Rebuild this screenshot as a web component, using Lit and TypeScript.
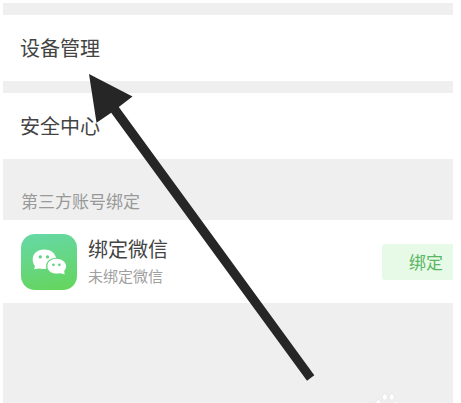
import { LitElement, html, css } from "lit";
import { customElement } from "lit/decorators.js";

@customElement("app-root")
export class AppRoot extends LitElement {
  static styles = css`
    :host {
      min-height: 100vh;
      box-sizing: border-box;
      padding: 3px 8px 0 3px;
      background: #fff;
      font-family: "Noto Sans CJK SC", sans-serif;
      position: relative;
      overflow: hidden;
      display: flex;
      flex-direction: column;
    }
    main {
      flex: 1;
      background: #efefef;
      padding-top: 12px;
    }
    .row {
      display: flex;
      align-items: center;
      height: 66px;
      padding: 0 17px;
      background: #fff;
      color: #444;
      font-size: 20px;
      line-height: 28px;
      text-decoration: none;
    }
    .row + .row {
      margin-top: 12px;
    }
    h2 {
      margin: 0;
      padding: 29px 18px 7px;
      font-size: 17px;
      line-height: 25px;
      font-weight: 400;
      color: #999;
    }
    .account {
      display: flex;
      align-items: center;
      height: 83px;
      padding-left: 18px;
      background: #fff;
    }
    .logo {
      flex: none;
      width: 56px;
      height: 56px;
    }
    .info {
      flex: 1;
      padding-left: 11px;
    }
    .name,
    .status {
      margin: 0;
    }
    .name {
      font-size: 20px;
      line-height: 28px;
      color: #444;
    }
    .status {
      font-size: 15px;
      line-height: 25px;
      color: #a0a0a0;
    }
    button {
      height: 36px;
      margin: 0;
      padding: 0 10px 0 27px;
      border: 0;
      border-radius: 3px 0 0 3px;
      background: #e6fae7;
      color: #5ab661;
      font: 17px/36px "Noto Sans CJK SC", sans-serif;
    }
    .arrow {
      position: absolute;
      left: 89px;
      top: 74px;
      width: 226px;
      height: 308px;
      pointer-events: none;
    }
    .paw {
      position: absolute;
      right: 62px;
      bottom: 0;
      width: 24px;
      height: 10px;
    }
  `;

  render() {
    return html`
      <main>
        <a class="row" href="#devices">设备管理</a>
        <a class="row" href="#security">安全中心</a>
        <h2>第三方账号绑定</h2>
        <section class="account">
          <svg class="logo" viewBox="0 0 56 56" aria-hidden="true">
            <defs>
              <linearGradient id="green" x1="0.4" y1="0" x2="0.6" y2="1">
                <stop offset="0" stop-color="#66d8a2" />
                <stop offset="1" stop-color="#65d560" />
              </linearGradient>
            </defs>
            <rect width="56" height="56" rx="14" fill="url(#green)" />
            <path
              fill="#fff"
              d="M23 15.500c-6.300 0-11.300 4.100-11.300 9.300 0 3 .6 5.400 2.200 7.100l-.6 3.400 4.800-.8c1.500.5 4.500.6 7.300.2-1.600-6.500 3.500-11 9.600-10.600C34.200 18.600 29.300 15.500 23 15.500z"
            />
            <path
              fill="#fff"
              d="M35.400 24.800c-5.200 0-9 3.300-9 7.400s3.900 7.400 9 7.400c1.500 0 2.900-.1 4.200-.4l4 1.200-.4-3.600c1.200-1.300 1.900-2.700 1.900-4.600 0-4.100-4.500-7.400-9.700-7.400z"
            />
            <g fill="#66d38a">
              <circle cx="19.300" cy="22.900" r="1.700" />
              <circle cx="26.500" cy="22.900" r="1.700" />
              <circle cx="32.400" cy="30.800" r="1.400" />
              <circle cx="38.300" cy="30.800" r="1.400" />
            </g>
          </svg>
          <div class="info">
            <p class="name">绑定微信</p>
            <p class="status">未绑定微信</p>
          </div>
          <button type="button">绑定</button>
        </section>
      </main>
      <svg class="paw" viewBox="0 0 24 10" aria-hidden="true">
        <g fill="#fff" fill-opacity="0.9" stroke="#e4e4e4" stroke-width="0.8">
          <ellipse cx="3.500" cy="9.500" rx="2.600" ry="2.800" />
          <ellipse cx="9.800" cy="4" rx="2.700" ry="3.300" />
          <ellipse cx="16.800" cy="4" rx="2.700" ry="3.300" />
          <ellipse cx="21" cy="10" rx="2.200" ry="2" />
        </g>
      </svg>
      <svg class="arrow" viewBox="0 0 226 308" aria-hidden="true">
        <path fill="#262626" d="M0 0L43.500 22.500L29.800 33L225.300 301.300L218 306.800L22.200 38.700L7.500 48.800Z" />
      </svg>
    `;
  }
}
